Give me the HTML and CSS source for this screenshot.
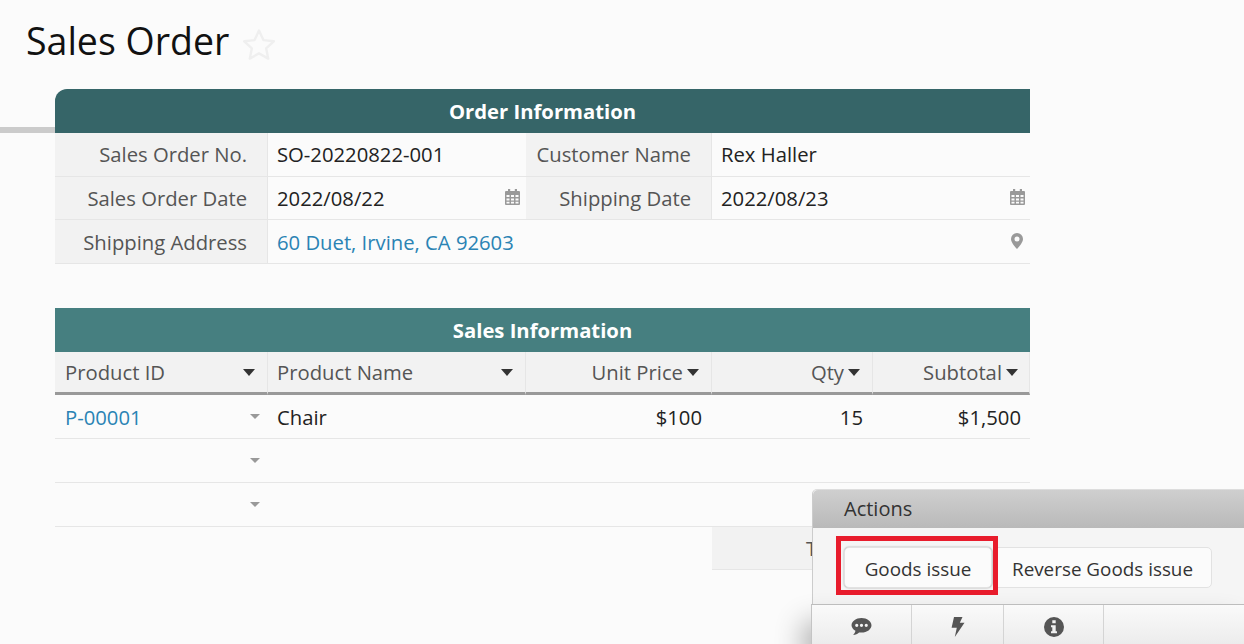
FILE: index.html
```html
<!DOCTYPE html>
<html lang="en">
<head>
<meta charset="utf-8">
<title>Sales Order</title>
<link rel="stylesheet" href="styles.css">
</head>
<body>
<div class="side-line"></div>
<header class="page-head">
  <h1 class="page-title">Sales Order</h1>
  <svg class="star" viewBox="0 0 34 32" width="34" height="32"><path d="M17 2.500l4.400 9.600 10.400 1.200-7.700 7 2.100 10.300L17 25.400 7.800 30.600l2.100-10.300-7.700-7 10.400-1.200z" fill="none" stroke="#efefef" stroke-width="2.400" stroke-linejoin="round"/></svg>
</header>
<main class="sheet">
  <section class="block">
    <h2 class="band band-dark">Order Information</h2>
    <div class="info-row info-first">
      <div class="label">Sales Order No.</div>
      <div class="value">SO-20220822-001</div>
      <div class="label">Customer Name</div>
      <div class="value">Rex Haller</div>
    </div>
    <div class="info-row">
      <div class="label">Sales Order Date</div>
      <div class="value value-cal">2022/08/22
        <svg class="cell-icon cal" viewBox="0 0 15 16" width="15" height="16"><path fill="#999" fill-rule="evenodd" d="M3 0h2.200v2h4.600V0H12v2h2a1 1 0 0 1 1 1v12a1 1 0 0 1-1 1H1a1 1 0 0 1-1-1V3a1 1 0 0 1 1-1h2zM1.500 6v2h3V6zm4.500 0v2h3V6zm4.500 0v2h3V6zM1.500 9.500v2h3v-2zm4.500 0v2h3v-2zm4.500 0v2h3v-2zM1.500 12.800v1.800h3v-1.800zm4.500 0v1.800h3v-1.800zm4.500 0v1.800h3v-1.800z"/></svg>
      </div>
      <div class="label">Shipping Date</div>
      <div class="value value-cal-end">2022/08/23
        <svg class="cell-icon cal" viewBox="0 0 15 16" width="15" height="16"><path fill="#999" fill-rule="evenodd" d="M3 0h2.200v2h4.600V0H12v2h2a1 1 0 0 1 1 1v12a1 1 0 0 1-1 1H1a1 1 0 0 1-1-1V3a1 1 0 0 1 1-1h2zM1.500 6v2h3V6zm4.500 0v2h3V6zm4.500 0v2h3V6zM1.500 9.500v2h3v-2zm4.500 0v2h3v-2zm4.500 0v2h3v-2zM1.500 12.800v1.800h3v-1.800zm4.500 0v1.800h3v-1.800zm4.500 0v1.800h3v-1.800z"/></svg>
      </div>
    </div>
    <div class="info-row">
      <div class="label">Shipping Address</div>
      <div class="value span-3"><a class="link">60 Duet, Irvine, CA 92603</a>
        <svg class="cell-icon marker" viewBox="0 0 12 16" width="12" height="16"><path fill="#999" fill-rule="evenodd" d="M6 0a6 6 0 0 1 6 6c0 3-3.500 7.500-6 10C3.500 13.500 0 9 0 6a6 6 0 0 1 6-6zm0 3.500a2.500 2.500 0 1 0 0 5 2.500 2.500 0 0 0 0-5z"/></svg>
      </div>
    </div>
  </section>

  <section class="block block-sales">
    <h2 class="band band-teal">Sales Information</h2>
    <div class="grid-head">
      <div class="head-cell"><span>Product ID</span><i class="caret push"></i></div>
      <div class="head-cell"><span>Product Name</span><i class="caret push"></i></div>
      <div class="head-cell end"><span>Unit Price</span><i class="caret"></i></div>
      <div class="head-cell end"><span>Qty</span><i class="caret"></i></div>
      <div class="head-cell end head-last"><span>Subtotal</span><i class="caret"></i></div>
    </div>
    <div class="grid-row">
      <div class="cell"><a class="link">P-00001</a><i class="caret-soft"></i></div>
      <div class="cell">Chair</div>
      <div class="cell end">$100</div>
      <div class="cell end">15</div>
      <div class="cell end cell-last">$1,500</div>
    </div>
    <div class="grid-row">
      <div class="cell"><i class="caret-soft"></i></div>
      <div class="cell"></div><div class="cell"></div><div class="cell"></div><div class="cell"></div>
    </div>
    <div class="grid-row">
      <div class="cell"><i class="caret-soft"></i></div>
      <div class="cell"></div><div class="cell"></div><div class="cell"></div><div class="cell"></div>
    </div>
    <div class="total-row">
      <div class="total-label">Total</div>
      <div class="total-value">$1,500</div>
    </div>
  </section>
</main>

<aside class="actions">
  <div class="actions-title">Actions</div>
  <div class="actions-body">
    <button class="btn btn-first">Goods issue</button>
    <button class="btn btn-second">Reverse Goods issue</button>
    <div class="red-mark"></div>
  </div>
  <div class="toolbar">
    <div class="tool tool-a"><svg viewBox="0 0 22 20" width="21" height="19"><path fill="#555" fill-rule="evenodd" d="M11 1c5.800 0 10.500 3.400 10.500 7.700S16.800 16.400 11 16.400c-.9 0-1.800-.1-2.600-.2C7 17.600 4.700 18.800 2.200 18.900c1.200-1.100 2.200-2.700 2.400-4.400C2.200 13.100.5 11 .5 8.700.5 4.400 5.200 1 11 1zM6 7a1.700 1.700 0 1 0 0 3.400A1.700 1.700 0 0 0 6 7zm5 0a1.700 1.700 0 1 0 0 3.400A1.700 1.700 0 0 0 11 7zm5 0a1.700 1.700 0 1 0 0 3.400A1.700 1.700 0 0 0 16 7z"/></svg></div>
    <div class="tool tool-b"><svg viewBox="0 0 14 20" width="14" height="20"><path fill="#555" d="M3 0h8.500L8.800 5.800H13.500L3.800 20l2-9.200H.6z"/></svg></div>
    <div class="tool tool-c"><svg viewBox="0 0 20 20" width="20" height="20"><path fill="#555" fill-rule="evenodd" d="M10 0a10 10 0 1 1 0 20 10 10 0 0 1 0-20zM8.300 3.300v3h3.400v-3zM7 8.300v2h1.300v4H7v2h6v-2h-1.300V8.300z"/></svg></div>
  </div>
</aside>
</body>
</html>
```
FILE: styles.css
```css
* { box-sizing: border-box; }
html, body { margin: 0; height: 100%; }
body {
  position: relative;
  width: 1244px;
  height: 644px;
  overflow: hidden;
  background: #fbfbfb;
  color: #222;
  font-family: "Open Sans", "Noto Sans", sans-serif;
  font-size: 20.25px;
}
.side-line {
  position: absolute;
  left: 0;
  top: 127px;
  width: 55px;
  height: 6px;
  background: #cbcbcb;
}
.page-head {
  display: flex;
  align-items: center;
  height: 89px;
  padding: 0 0 7px 26px;
}
.page-title {
  margin: 0;
  font-size: 37.5px;
  font-weight: 400;
  line-height: 48px;
  color: #111;
}
.star { margin-left: 13px; margin-top: 6px; }
.sheet { margin-left: 55px; width: 975px; }
.block-sales { margin-top: 44px; }
.band {
  margin: 0;
  height: 44px;
  line-height: 44px;
  text-align: center;
  font-size: 20.25px;
  font-weight: 700;
  color: #fff;
}
.band-dark { background: #366568; border-radius: 12px 0 0 0; }
.band-teal { background: #467f80; }

.info-row {
  display: grid;
  grid-template-columns: 213px 258px 186px 318px;
  height: 44px;
  border-bottom: 1px solid #e6e6e6;
}
.info-row:nth-child(3) { height: 43px; }
.label {
  display: flex;
  align-items: center;
  justify-content: flex-end;
  padding-right: 20px;
  background: #f2f2f2;
  border-right: 1px solid #e6e6e6;
  color: #555;
  white-space: nowrap;
}
.info-first .label, .info-first .value { padding-bottom: 2px; }
.info-row:last-child .label, .info-row:last-child .value { padding-top: 1px; }
.value {
  display: flex;
  align-items: center;
  justify-content: space-between;
  padding: 0 5px 0 9px;
  color: #222;
  white-space: nowrap;
}
.value-cal { padding-right: 6px; }
.value-cal-end { padding-right: 5px; }
.cal { margin-top: -2px; }
.span-3 { grid-column: span 3; padding-right: 7px; }
.marker { margin-top: -3px; }
.link { color: #2a83b4; }

.grid-head, .grid-row {
  display: grid;
  grid-template-columns: 213px 258px 186px 161px 157px;
}
.grid-head { height: 43px; }
.head-cell {
  display: flex;
  align-items: center;
  padding: 0 12px 0 10px;
  background: #f2f2f2;
  border-right: 1px solid #e6e6e6;
  border-bottom: 3px solid #999;
  color: #555;
  white-space: nowrap;
}
.head-cell:nth-child(2) { padding-left: 9px; }
.head-cell.end { justify-content: flex-end; }
.head-cell.head-last { padding-right: 11px; }
.caret {
  width: 0;
  height: 0;
  margin-left: 4px;
  border-left: 6px solid transparent;
  border-right: 6px solid transparent;
  border-top: 7px solid #333;
}
.caret.push { margin-left: auto; }
.grid-row { height: 44px; border-bottom: 1px solid #e6e6e6; }
.cell {
  display: flex;
  align-items: center;
  padding: 1px 10px 0;
  white-space: nowrap;
}
.cell:nth-child(2) { padding-left: 9px; }
.cell.end { justify-content: flex-end; }
.cell-last { padding-right: 9px; }
.caret-soft {
  width: 0;
  height: 0;
  margin-left: auto;
  margin-right: -2px;
  margin-bottom: 2px;
  border-left: 5px solid transparent;
  border-right: 5px solid transparent;
  border-top: 5px solid #999;
}
.total-row {
  display: grid;
  grid-template-columns: 161px 157px;
  justify-content: end;
  height: 43px;
}
.total-label {
  display: flex;
  align-items: center;
  justify-content: flex-end;
  padding-right: 20px;
  background: #f2f2f2;
  border-bottom: 1px solid #e6e6e6;
  color: #555;
}
.total-value { display: flex; align-items: center; justify-content: flex-end; padding-right: 10px; }

.actions {
  position: absolute;
  left: 812px;
  top: 489px;
  width: 432px;
  height: 155px;
  display: flex;
  flex-direction: column;
  background: #f5f5f5;
  border-top: 1px solid #ddd;
  border-left: 1px solid #ccc;
  border-top-left-radius: 5px;
}
.actions-title {
  height: 38px;
  padding-left: 31px;
  line-height: 38px;
  font-size: 20px;
  color: #333;
  background: linear-gradient(#cfcfcf, #b9b9b9);
  border-top-left-radius: 5px;
}
.actions-body {
  position: relative;
  display: flex;
  height: 76px;
  padding: 19px 0 0 31px;
}
.btn {
  height: 41px;
  padding: 2px 19px 0;
  font: inherit;
  font-size: 18.85px;
  color: #333;
  background: #fbfbfb;
  border: 1px solid #e2e2e2;
  border-radius: 5px;
}
.btn-first { width: 148px; padding: 2px 0 0; box-shadow: 0 0 2px rgba(0, 0, 0, .35); position: relative; }
.btn-second { padding-right: 18px; }
.red-mark {
  position: absolute;
  left: 23px;
  top: 8px;
  width: 162px;
  height: 59px;
  border: 5px solid #e81c2c;
}
.toolbar {
  display: flex;
  flex: 1;
  margin-left: -2px;
  border-top: 1px solid #bdbdbd;
  border-left: 1px solid #c4c4c4;
  background: linear-gradient(#fafafa, #ececec);
  box-shadow: -8px 18px 28px rgba(0, 0, 0, .3);
}
.tool {
  display: flex;
  align-items: center;
  justify-content: center;
  padding-top: 4px;
  border-right: 1px solid #d4d4d4;
}
.tool-a { width: 100px; }
.tool-b { width: 92px; }
.tool-c { width: 100px; }
```
